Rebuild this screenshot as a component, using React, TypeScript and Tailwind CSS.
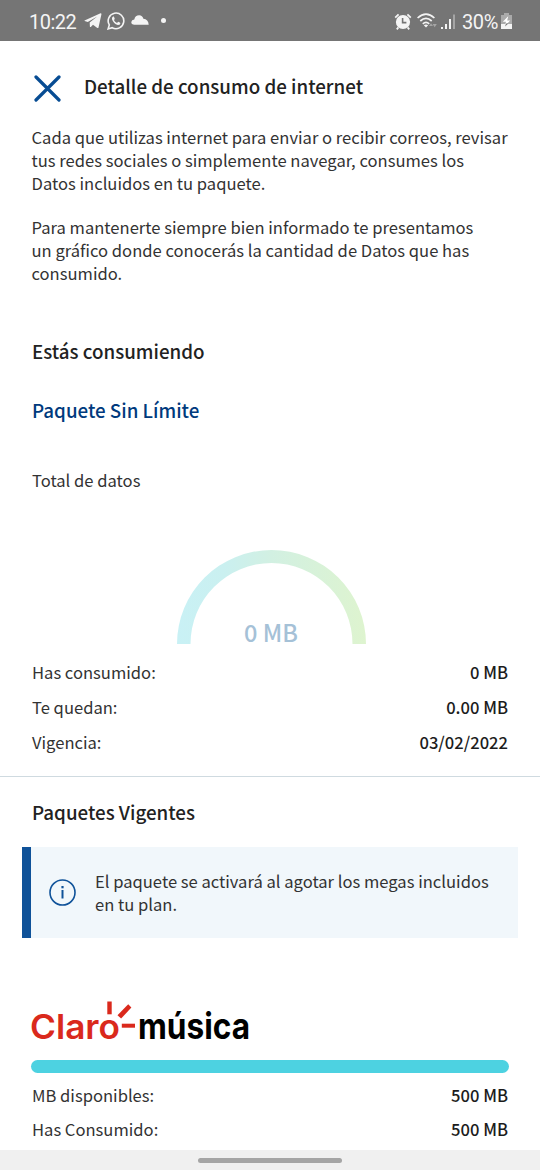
import type { ReactNode } from 'react';

const usage = [
  { label: 'Has consumido:', value: '0 MB' },
  { label: 'Te quedan:', value: '0.00 MB' },
  { label: 'Vigencia:', value: '03/02/2022' },
];

const music = [
  { label: 'MB disponibles:', value: '500 MB' },
  { label: 'Has Consumido:', value: '500 MB' },
];

function StatusBar() {
  return (
    <div className="flex h-[41px] items-center bg-[#757575] pl-[29px] pr-[28px] pt-[3px] font-['Roboto',sans-serif] text-[20px] text-[#f4f4f4]">
      <span className="w-[55px] whitespace-nowrap tracking-[-0.5px]">10:22</span>
      <svg width="18" height="16" viewBox="0 0 18 16" className="-mt-[2px]" fill="currentColor">
        <path d="M0.5 7.5 L16 0.4 Q17.7 0 17.4 1.6 L14.5 14.4 Q14.1 15.6 13 14.8 L9 11.8 L6.8 14 Q6 14.4 5.9 13.4 L5.7 9.6 L13.2 3.4 L3.8 8.9 L0.6 8 Z" />
      </svg>
      <svg width="18" height="18" viewBox="0 0 18 18" className="-mt-[2px] ml-[5px]">
        <path d="M1.1 16.9 L2.3 12.9 A7.8 7.8 0 1 1 5.2 15.7 Z" fill="none" stroke="currentColor" strokeWidth="1.6" />
        <path d="M6.1 4.5 Q4.5 5.5 5 7.3 Q6.6 11.8 10.8 13.1 Q13 13.2 13.4 11.2 Q13.4 10.7 11.2 9.8 L10 11 Q7.7 10 6.9 8.1 L7.8 6.9 L6.9 4.6 Z" fill="currentColor" />
      </svg>
      <svg width="18" height="10" viewBox="0 0 18 10" className="-mt-[4px] ml-[6px]" fill="currentColor">
        <path d="M3.5 9.8 Q0.2 9.6 0.3 7 Q0.6 4.6 3.3 4.4 Q4.2 0.3 8.2 0.3 Q11.4 0.4 12.4 3.8 Q17.3 4.3 17.7 9.8 Z" />
      </svg>
      <span className="-mt-[3px] ml-[12px] h-[5px] w-[5px] rounded-full bg-[#f4f4f4]" />

      <svg width="18" height="18" viewBox="0 0 18 18" className="-mt-[1px] ml-auto mr-px">
        <circle cx="9" cy="9" r="7.1" fill="currentColor" />
        <path d="M1.2 4.6 L4.6 1.4 M13.4 1.4 L16.8 4.6 M4.4 14.4 L2.8 16.4 M13.6 14.4 L15.2 16.4" stroke="currentColor" strokeWidth="1.8" />
        <path d="M8.6 5 V9.6 H12.4" fill="none" stroke="#757575" strokeWidth="1.6" />
      </svg>
      <svg width="21" height="16" viewBox="0 0 21 16" className="-mt-[2px] ml-[4px]">
        <g fill="none" stroke="currentColor" strokeWidth="1.7">
          <path d="M0.6 5 Q9 -2.8 17.4 5" />
          <path d="M3.3 8 Q9 2.8 14.7 8" />
          <path d="M5.8 10.8 Q9 7.8 12.2 10.8" />
        </g>
        <path d="M6.8 12.2 Q9 10.6 11.2 12.2 L9 14.4 Z" fill="currentColor" />
        <path d="M12 13 L14 10.2 L16 13 Z M15.6 11 L19.8 11 L17.7 14.2 Z" fill="#a5a5a5" />
      </svg>
      <svg width="15" height="16" viewBox="0 0 15 16" className="-mt-[1px] ml-[3px]" fill="currentColor">
        <rect x="0" y="13" width="2" height="2" />
        <rect x="4" y="10" width="2" height="5" />
        <rect x="8" y="5" width="2" height="10" />
        <rect x="12" y="0.5" width="2" height="14.5" fill="#a5a5a5" />
      </svg>
      <span className="ml-[6px] w-[39px] whitespace-nowrap tracking-[-0.4px]">30%</span>
      <svg width="11" height="16" viewBox="0 0 11 16" className="-mt-[2px]">
        <path d="M3 0 H8 V2 H11 V16 H0 V2 H3 Z" fill="#aaa" />
        <path d="M0 11 H11 V16 H0 Z" fill="currentColor" />
        <path d="M7.2 3.2 L1.8 8.7 H5 L3.9 13 L9.2 7.5 H6.2 Z" fill="#fff" />
        <path d="M5 10.5 L4 13.5 L7.4 10.5 Z" fill="#757575" />
      </svg>
    </div>
  );
}

function Heading({ children, className }: { children: ReactNode; className: string }) {
  return <h2 className={`whitespace-nowrap text-[18.75px] font-medium leading-[24px] ${className}`}>{children}</h2>;
}

function Row({ label, value }: { label: string; value: string }) {
  return (
    <div className="flex items-center justify-between">
      <span>{label}</span>
      <span className="font-medium text-[#1c1c1c]">{value}</span>
    </div>
  );
}

function Gauge() {
  return (
    <div className="relative mx-auto mt-[58px] h-[94px] w-[189px]">
      <svg width="189" height="94" viewBox="0 0 189 94" className="ml-px">
        <defs>
          <linearGradient id="gauge" x1="0" x2="1" y1="0" y2="0">
            <stop offset="0" stopColor="#c9f1f5" />
            <stop offset="0.25" stopColor="#caf0f0" />
            <stop offset="0.5" stopColor="#d2f0e2" />
            <stop offset="1" stopColor="#def4cf" />
          </linearGradient>
        </defs>
        <path d="M0 94 A94.5 94 0 0 1 189 94 H175.5 A81 81 0 0 0 13.5 94 Z" fill="url(#gauge)" />
      </svg>
      <span className="absolute inset-x-0 top-[67px] pl-[2px] text-center text-[23.5px] font-medium leading-[30px] text-[#a5c1d7]">0 MB</span>
    </div>
  );
}

function ClaroLogo() {
  return (
    <svg width="220" height="50" viewBox="0 0 220 50" className="-mb-2 block overflow-visible">
      <g fill="#da291c">
        <text x="-1" y="37.5" fontFamily="Inter, sans-serif" fontSize="34.5" fontWeight="600" textLength="90" lengthAdjust="spacingAndGlyphs">Claro</text>
        <rect x="76.3" y="0.5" width="4.4" height="12.8" />
        <path d="M86.5 14.2 L97.2 3.3 L100.4 6.5 L90.1 17.6 Z" />
        <rect x="90.8" y="22.7" width="13.2" height="4" />
      </g>
      <text x="107" y="37.5" fill="#000" fontFamily="Inter, sans-serif" fontSize="36" fontWeight="700" textLength="112" lengthAdjust="spacingAndGlyphs">música</text>
    </svg>
  );
}

export default function App() {
  return (
    <div className="flex h-[1170px] w-[540px] flex-col overflow-hidden bg-white font-['Noto_Sans_CJK_SC',sans-serif] text-[16.58px] leading-[23px] text-[#333]">
      <StatusBar />

      <main className="h-[1109px] overflow-hidden">
        <div className="flex items-center pl-[34px] pt-[33px] text-[#222]">
          <svg width="27" height="27" viewBox="0 0 27 27" className="mt-[1px]">
            <path d="M2 2 L25 25 M25 2 L2 25" stroke="#074c93" strokeWidth="3.2" strokeLinecap="round" />
          </svg>
          <Heading className="ml-[23px] -mt-[5px]">Detalle de consumo de internet</Heading>
        </div>

        <div className="px-[32px]">
          <p className="-ml-[0.5px] mt-[24px] whitespace-nowrap">
            Cada que utilizas internet para enviar o recibir correos, revisar<br />
            tus redes sociales o simplemente navegar, consumes los<br />
            Datos incluidos en tu paquete.
          </p>
          <p className="-ml-[0.5px] mt-[21px] whitespace-nowrap">
            Para mantenerte siempre bien informado te presentamos<br />
            un gráfico donde conocerás la cantidad de Datos que has<br />
            consumido.
          </p>
          <Heading className="mt-[54px] text-[#222]">Estás consumiendo</Heading>
          <Heading className="mt-[35px] text-[#003a7d]">Paquete Sin Límite</Heading>
          <p className="mt-[47px]">Total de datos</p>
          <Gauge />
          <div className="mt-[17px] flex flex-col gap-[12px]">
            {usage.map(r => <Row key={r.label} {...r} />)}
          </div>
        </div>

        <hr className="mt-[22px] border-t-[1px] border-[#cfdae0]" />

        <Heading className="ml-[32px] mt-[23px] text-[#222]">Paquetes Vigentes</Heading>
        <div className="ml-[22px] mr-[22px] mt-[23px] flex h-[91px] items-center border-l-[9px] border-[#0f5299] bg-[#f1f7fb] pl-[18px]">
          <svg width="27" height="27" viewBox="0 0 27 27" fill="none" stroke="#0f5299">
            <circle cx="13.5" cy="13.5" r="12.5" strokeWidth="1.6" />
            <path d="M13.5 11 V19.5" strokeWidth="2" />
            <path d="M13.5 7 V9.3" strokeWidth="2.2" />
          </svg>
          <p className="ml-[19px] whitespace-nowrap">
            El paquete se activará al agotar los megas incluidos<br />
            en tu plan.
          </p>
        </div>

        <div className="mt-[63px] px-[31px]">
          <ClaroLogo />
          <div className="mt-[17px] h-[13px] rounded-full bg-[#4dd2e1]" />
          <div className="mt-[11px] flex flex-col gap-[11px] px-px">
            {music.map(r => <Row key={r.label} {...r} />)}
          </div>
        </div>
      </main>

      <div className="flex h-[20px] items-center justify-center bg-[#f0f0f0]">
        <div className="h-[5px] w-[144px] rounded-full bg-[#a5a5a5]" />
      </div>
    </div>
  );
}
